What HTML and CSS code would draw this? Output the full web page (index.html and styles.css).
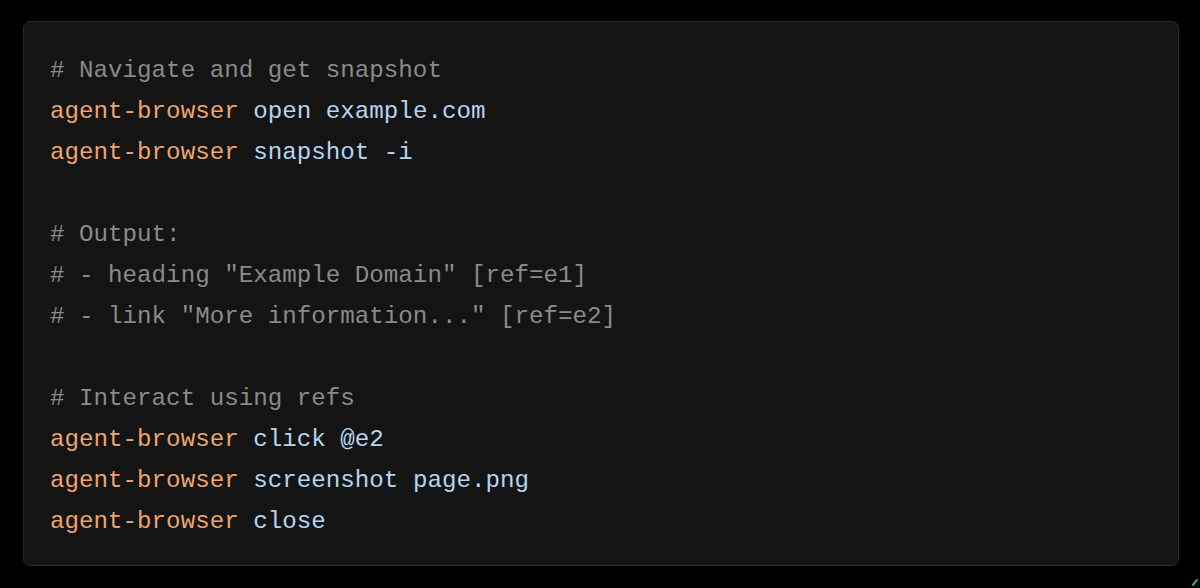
FILE: index.html
```html
<!DOCTYPE html>
<html lang="en">
<head>
<meta charset="utf-8">
<title>agent-browser</title>
<link rel="stylesheet" href="styles.css">
</head>
<body>
<div class="card">
<pre class="code"><span class="c"># Navigate and get snapshot</span>
<span class="k">agent-browser</span> <span class="a">open example.com</span>
<span class="k">agent-browser</span> <span class="a">snapshot -i</span>

<span class="c"># Output:</span>
<span class="c"># - heading "Example Domain" [ref=e1]</span>
<span class="c"># - link "More information..." [ref=e2]</span>

<span class="c"># Interact using refs</span>
<span class="k">agent-browser</span> <span class="a">click @e2</span>
<span class="k">agent-browser</span> <span class="a">screenshot page.png</span>
<span class="k">agent-browser</span> <span class="a">close</span></pre>
</div>
<span class="corner"></span>
</body>
</html>
```
FILE: styles.css
```css
html, body {
  margin: 0;
  padding: 0;
  background: #000;
  height: 100%;
  overflow: hidden;
}
body {
  padding: 21px 21px 0 23px;
  box-sizing: border-box;
}
.card {
  width: 1156px;
  height: 545px;
  box-sizing: border-box;
  background: #141414;
  border: 1px solid #2a2a2a;
  border-radius: 7px;
  padding: 28px 26px 24px 26px;
}
.code {
  margin: 0;
  font-family: "Liberation Mono", "DejaVu Sans Mono", monospace;
  font-size: 24.2px;
  line-height: 41px;
  color: #8c8c8c;
  white-space: pre;
}
.c { color: #8a8a8a; }
.k { color: #eda46c; }
.a { color: #b3d4f1; }
.corner {
  position: absolute;
  right: -2px;
  bottom: -2px;
  width: 8px;
  height: 8px;
  border-top: 2px solid #1fb5a8;
  transform: rotate(-50deg);
}
```
